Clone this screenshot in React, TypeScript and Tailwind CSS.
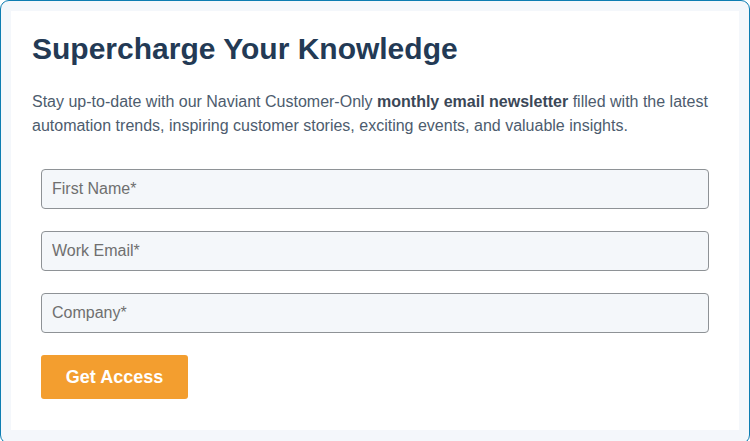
import React from 'react';

const fields = ['First Name*', 'Work Email*', 'Company*'];

export default function App() {
  return (
    <div className="h-[441px] w-[750px] overflow-hidden bg-white font-['Liberation_Sans',Arial,sans-serif]">
      {/* --- Outer frame --- */}
      <div className="h-[444px] rounded-[9px] border-[1.5px] border-[#0d7db2] bg-[#f4f7fb] p-[10px]">
        <div className="h-[419px] bg-white pl-[21px] pr-[30px] pt-[20px]">
          <h1 className="text-[30px] font-bold leading-[36px] text-[#233a55]">Supercharge Your Knowledge</h1>

          <p className="mt-[23px] text-[16px] leading-[24px] text-[#4d5c6e]">
            Stay up-to-date with our Naviant Customer-Only{' '}
            <strong className="font-bold text-[#3b4757]">monthly email newsletter</strong> filled with the latest
            automation trends, inspiring customer stories, exciting events, and valuable insights.
          </p>

          <form className="mt-[31px] flex flex-col gap-[22px] pl-[9px]">
            {fields.map(f => (
              <input
                key={f}
                placeholder={f}
                className="h-[40px] w-[668px] rounded-[4px] border border-[#8e9296] bg-[#f4f7fa] px-[10px] text-[16px] text-[#333] placeholder:text-[#6f6f6f] outline-none"
              />
            ))}
            <button
              type="button"
              className="h-[44px] w-[147px] rounded-[3px] bg-[#f39e2f] text-[18px] font-bold text-white"
            >
              Get Access
            </button>
          </form>
        </div>
      </div>
    </div>
  );
}
